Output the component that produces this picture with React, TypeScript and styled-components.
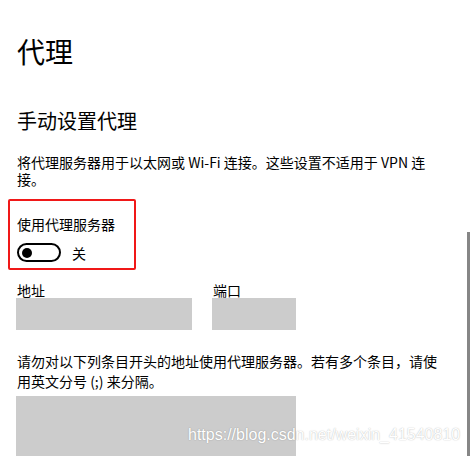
import React from "react";
import styled, { createGlobalStyle } from "styled-components";

const GlobalStyle = createGlobalStyle`
  html, body {
    margin: 0;
    padding: 0;
    background: #ffffff;
    overflow: hidden;
  }
  body {
    font-family: "Noto Sans CJK SC", "Noto Sans", sans-serif;
    color: #000000;
  }
`;

const Page = styled.div`
  position: relative;
  width: 470px;
  height: 456px;
  overflow: hidden;
  box-sizing: border-box;
  padding: 33px 31px 0 17px;
`;

const Title = styled.h1`
  margin: 0;
  font-size: 28px;
  font-weight: 400;
  line-height: 36px;
`;

const Heading = styled.h2`
  margin: 38px 0 0;
  font-size: 20px;
  font-weight: 400;
  line-height: 28px;
`;

const Paragraph = styled.p<{ $lh: number; $mt: number }>`
  margin: ${(p) => p.$mt}px 0 0;
  font-size: 14px;
  line-height: ${(p) => p.$lh}px;
  width: 422px;
`;

const ToggleGroup = styled.div`
  margin: 11px 0 0 -9px;
  width: 128px;
  box-sizing: border-box;
  border: 2px solid #f01818;
  border-radius: 2px;
  padding: 13px 0 6px 7px;
  display: flex;
  flex-direction: column;
  gap: 9px;
`;

const Label = styled.div<{ $lh?: number }>`
  font-size: 14px;
  line-height: ${(p) => p.$lh ?? 20}px;
`;

const ToggleRow = styled.div`
  display: flex;
  align-items: center;
  gap: 11px;
  height: 19px;
`;

const Toggle = styled.div`
  width: 44px;
  height: 19px;
  box-sizing: border-box;
  border: 2px solid #000;
  border-radius: 10px;
  display: flex;
  align-items: center;
  padding-left: 3px;
`;

const Knob = styled.div`
  width: 10px;
  height: 10px;
  border-radius: 50%;
  background: #000;
`;

const Fields = styled.div`
  margin-top: 12px;
  display: flex;
  gap: 20px;
  margin-left: -1px;
`;

const Field = styled.div`
  display: flex;
  flex-direction: column;
`;

const FieldLabel = styled(Label)`
  padding-left: 1px;
`;

const Input = styled.div<{ $w: number; $h: number }>`
  width: ${(p) => p.$w}px;
  height: ${(p) => p.$h}px;
  background: #cccccc;
`;

const Area = styled(Input)`
  margin-top: 5px;
  margin-left: -1px;
`;

const Scrollbar = styled.div`
  position: absolute;
  right: 0;
  top: 232px;
  bottom: 0;
  width: 3px;
  background: #868686;
`;

const Watermark = styled.div`
  position: absolute;
  left: 188px;
  top: 425px;
  font-family: "Liberation Sans", Arial, sans-serif;
  font-size: 16px;
  line-height: 20px;
  color: #ffffff;
  text-shadow: 0 0 1px rgba(0, 0, 0, 0.22), 0 0 2px rgba(0, 0, 0, 0.12);
  white-space: nowrap;
  pointer-events: none;
`;

export default function App() {
  return (
    <>
      <GlobalStyle />
      <Page>
        <Title>代理</Title>
        <Heading>手动设置代理</Heading>
        <Paragraph $lh={17} $mt={19}>
          将代理服务器用于以太网或 Wi-Fi 连接。这些设置不适用于 VPN 连接。
        </Paragraph>
        <ToggleGroup>
          <Label>使用代理服务器</Label>
          <ToggleRow>
            <Toggle>
              <Knob />
            </Toggle>
            <Label>关</Label>
          </ToggleRow>
        </ToggleGroup>
        <Fields>
          <Field>
            <FieldLabel $lh={16}>地址</FieldLabel>
            <Input $w={176} $h={32} />
          </Field>
          <Field>
            <FieldLabel $lh={16}>端口</FieldLabel>
            <Input $w={84} $h={32} />
          </Field>
        </Fields>
        <Paragraph $lh={20} $mt={21}>
          请勿对以下列条目开头的地址使用代理服务器。若有多个条目，请使用英文分号 (;) 来分隔。
        </Paragraph>
        <Area $w={280} $h={80} />
        <Scrollbar />
        <Watermark>https://blog.csdn.net/weixin_41540810</Watermark>
      </Page>
    </>
  );
}
